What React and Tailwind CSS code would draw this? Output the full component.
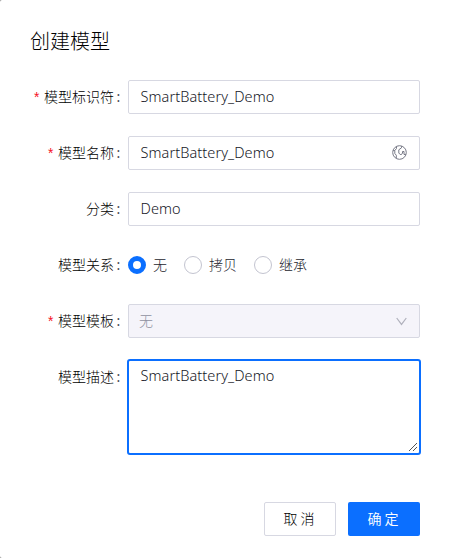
import React from "react";

function Row({ label, required, children, className = "" }) {
  return (
    <div className={`flex ${className}`}>
      <div className="flex h-[34px] w-[98px] shrink-0 items-center justify-end whitespace-nowrap pb-[2px] text-[14px] text-black">
        {required && <span className="mr-[3px] mt-[6px] font-['Liberation_Mono'] text-[14px] font-normal leading-none text-[#f5121d]">*</span>}
        <span>{label}</span>
        <span className="ml-[2px] mr-[7px] w-[5px] text-center font-['Noto_Sans'] font-normal text-[#484955]">:</span>
      </div>
      {children}
    </div>
  );
}

function Field({ value, children }) {
  return (
    <div className="flex h-[34px] w-[292px] items-center justify-between rounded-[2px] border border-[#d7d8e2] bg-white pl-[11.5px] pr-[12px]">
      <div className="flex pb-[2px]"><Value>{value}</Value></div>
      {children}
    </div>
  );
}

function Value({ children }) {
  return <span className="font-['Noto_Sans'] text-[14.5px] font-light leading-[22px] tracking-[0.08px] text-[#16171f]">{children}</span>;
}

function Radio({ label, checked }) {
  return (
    <div className="flex h-[34px] items-center">
      <span className={checked ? "size-[18px] rounded-full border-[5px] border-[#0b6fff] bg-white" : "size-[18px] rounded-full border border-[#c3c4d0] bg-white"} />
      <span className="ml-[7px] mr-px pb-[2px] text-[14px] text-[#25262e]">{label}</span>
    </div>
  );
}

function Globe() {
  return (
    <svg width="15" height="15" viewBox="0 0 15 15" fill="none" stroke="#777986" strokeWidth="1" className="-mt-px">
      <circle cx="7.5" cy="7.5" r="6.8" />
      <path d="M1.2 5.5H2.8L4.5 3.5V1.5M2.8 5.5V8.5L4.3 10.2V13M9.5 1.2V2.8L6.8 4.8V8L8.2 9.5H9.5L10.5 8V6.5H12V9.5H13.8" />
    </svg>
  );
}

export default function App() {
  return (
    <div className="bg-[#8c8c8c]">
      <div className="h-[558px] w-[449px] overflow-hidden rounded-l-[2px] bg-white pl-[30px] pt-[26px] font-['Noto_Sans_CJK_SC',sans-serif] font-light">
        <h1 className="h-[54px] text-[20px] leading-[30px] text-black">创建模型</h1>
        <Row label="模型标识符" required className="mb-[22px]">
          <Field value="SmartBattery_Demo" />
        </Row>
        <Row label="模型名称" required className="mb-[22px]">
          <Field value="SmartBattery_Demo"><Globe /></Field>
        </Row>
        <Row label="分类" className="mb-[22px]">
          <Field value="Demo" />
        </Row>
        <Row label="模型关系" className="mb-[22px]">
          <div className="flex gap-[16px]">
            <Radio label="无" checked />
            <Radio label="拷贝" />
            <Radio label="继承" />
          </div>
        </Row>
        <Row label="模型模板" required className="mb-[22px]">
          <div className="flex h-[34px] w-[292px] items-center justify-between rounded-[2px] border border-[#d7d8e2] bg-[#f5f4fa] pl-[10px] pr-[12px] text-[14px] text-[#9091a0]">
            <span className="pb-[2px]">无</span>
            <svg width="11" height="9" viewBox="0 0 11 9" fill="none" stroke="#b0b1bc" strokeWidth="1.2">
              <path d="M.7 1 5.5 7.4 10.3 1" />
            </svg>
          </div>
        </Row>
        <Row label="模型描述">
          <div className="-ml-px -mt-px flex h-[96px] w-[294px] items-end justify-between rounded-[3px] border-2 border-[#0b6fff] bg-white pl-[11.5px]">
            <div className="h-full pt-px"><Value>SmartBattery_Demo</Value></div>
            <svg width="11" height="11" viewBox="0 0 11 11" fill="none" stroke="#555" strokeWidth="1">
              <path d="M1 9 9 1M5 9 9 5" />
            </svg>
          </div>
        </Row>
        <div className="mt-[47px] flex gap-[12px] pl-[234px] text-[14px]">
          <button className="h-[34px] w-[72px] rounded-[2px] border border-[#d7d8e2] bg-white pb-[2px] pr-[2px] text-black">取 消</button>
          <button className="h-[34px] w-[72px] rounded-[2px] bg-[#0b6fff] pb-[2px] pr-[2px] font-[350] text-white">确 定</button>
        </div>
      </div>
    </div>
  );
}
